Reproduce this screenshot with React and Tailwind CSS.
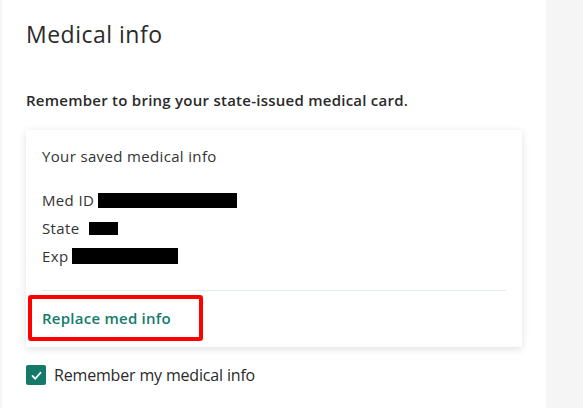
export default function App() {
  const font = { fontFamily: '"Open Sans", "Liberation Sans", sans-serif' };
  return (
    <div className="flex h-[408px] w-[583px] overflow-hidden bg-white" style={font}>
      <div className="w-[2px] shrink-0 bg-[#f6f6f6]" />
      <div className="w-[544px] shrink-0 bg-white">
        <h1 className="ml-[24px] mt-[20px] text-[23px] leading-[28px] font-medium tracking-[0.5px] text-[#2a2a2a]">Medical info</h1>
        <p className="ml-[24px] mt-[42px] text-[15px] leading-[20px] font-semibold tracking-[0.25px] text-[#2a2a2a]">
          Remember to bring your state-issued medical card.
        </p>
        <div className="ml-[24px] mt-[20px] w-[496px] bg-white pt-[16px] pb-[6px] shadow-[0_2px_8px_rgba(0,0,0,0.12)]">
          <div className="ml-[16px] text-[15px] leading-[20px] tracking-[0.35px] text-[#333]">Your saved medical info</div>
          <div className="ml-[16px] mt-[24px] flex flex-col gap-[8px] text-[15px] leading-[20px] tracking-[0.35px] text-[#333]">
            <div className="flex items-center">
              <span>Med ID</span>
              <span className="ml-[4px] inline-block h-[15px] w-[139px] bg-black" />
            </div>
            <div className="flex items-center">
              <span>State</span>
              <span className="ml-[10px] inline-block h-[13px] w-[29px] bg-black" />
            </div>
            <div className="flex items-center">
              <span>Exp</span>
              <span className="ml-[4px] inline-block h-[16px] w-[106px] bg-black" />
            </div>
          </div>
          <div className="mx-[16px] mt-[24px] h-px bg-[#e2ecea]" />
          <div className="ml-[2px] mt-[4px] w-[175px] rounded-[3px] border-[4px] border-[#ff0000] pl-[10px] pt-[7px] pb-[7px]">
            <span className="text-[15px] leading-[20px] font-semibold tracking-[0.25px] text-[#137c6b]">Replace med info</span>
          </div>
        </div>
        <label className="ml-[24px] mt-[18px] flex items-center">
          <span className="flex h-[20px] w-[20px] items-center justify-center rounded-[2px] bg-[#137a69]">
            <svg width="13" height="13" viewBox="0 0 16 16" fill="none">
              <path d="M3 8.5 L6.5 12 L13 4.5" stroke="white" strokeWidth="2.2" strokeLinecap="round" strokeLinejoin="round" />
            </svg>
          </span>
          <span className="ml-[8px] text-[16px] leading-[20px] tracking-[-0.17px] text-[#2a2a2a]">Remember my medical info</span>
        </label>
      </div>
      <div className="flex-1 bg-[#f5f5f5]" />
    </div>
  );
}
